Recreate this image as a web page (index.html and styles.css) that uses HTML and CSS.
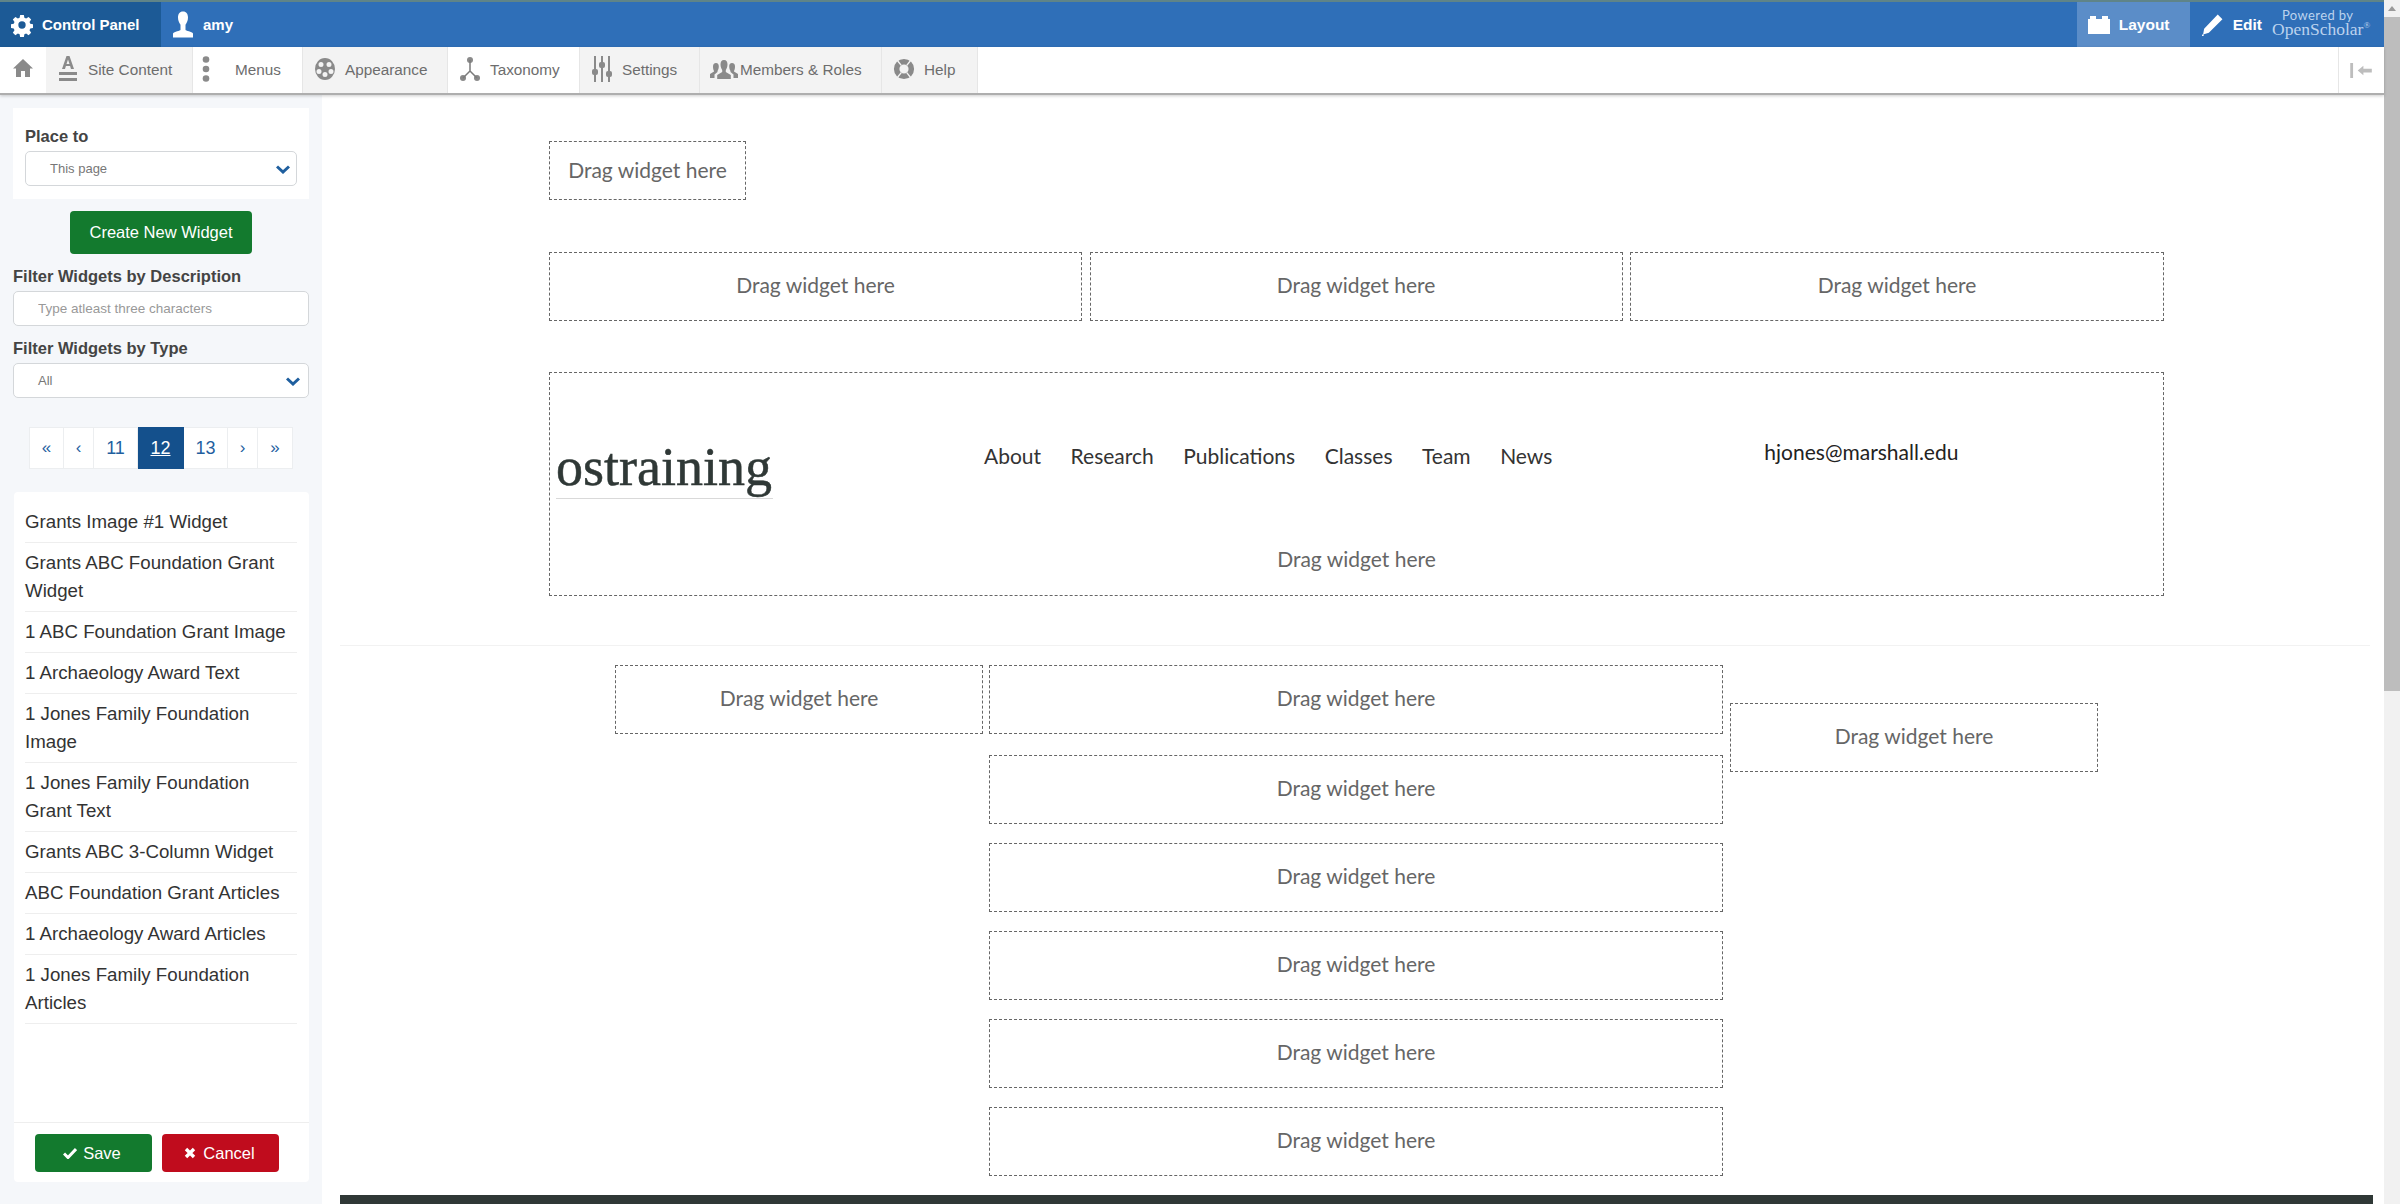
FILE: index.html
```html
<!DOCTYPE html>
<html lang="en">
<head>
    <meta charset="UTF-8">
    <title>Layout - OpenScholar</title>
    <link rel="stylesheet" href="styles.css">
</head>
<body>
<div class="window">
    <div class="page">
        <header class="topbar">
            <div class="cp">
                <svg class="ic-gear" viewBox="0 0 24 24"><path d="M10 1h4l.6 3.2 1.9.8 2.7-1.8 2.8 2.8-1.8 2.7.8 1.9 3 .6v4l-3 .6-.8 1.9 1.8 2.7-2.8 2.8-2.7-1.8-1.9.8-.6 3.2h-4l-.6-3.2-1.9-.8-2.7 1.8-2.8-2.8 1.8-2.7-.8-1.9-3-.6v-4l3-.6.8-1.9L2 6l2.8-2.8 2.7 1.8 1.9-.8zM12 8a4 4 0 1 0 0 8 4 4 0 0 0 0-8z" fill-rule="evenodd"/></svg>
                <span>Control Panel</span>
            </div>
            <div class="user">
                <svg class="ic-user" viewBox="0 0 24 26"><path d="M12 0c3.400 0 5 2.600 5 6 0 3-1.200 5.600-2.500 7.200v5c0 1.200 6.500 1.600 7.500 3.800v4H2v-4c1-2.200 7.500-2.600 7.500-3.800v-5C8.200 11.600 7 9 7 6c0-3.400 1.600-6 5-6z"/></svg>
                <span>amy</span>
            </div>
            <div class="topright">
                <div class="mode active">
                    <svg class="ic-block" viewBox="0 0 22 18"><path d="M0 3h2V0h6v3h6V0h6v3h2v15H0z"/></svg>
                    <span>Layout</span>
                </div>
                <div class="mode">
                    <svg class="ic-pencil" viewBox="0 0 22 22"><path d="M16 1.500l4.500 4.500L7.500 19 2 20.500 3 15zM1 20.500h1.500V22H1z"/></svg>
                    <span>Edit</span>
                </div>
                <div class="powered">
                    <span class="p1">Powered by</span>
                    <span class="p2">OpenScholar<sup>&reg;</sup></span>
                </div>
            </div>
        </header>

        <nav class="toolbar">
            <a class="tab home"><svg viewBox="0 0 22 20"><path d="M11 1l10 9.500h-3V19h-5v-6H9v6H4v-8.500H1z"/></svg></a>
            <a class="tab grey w-site"><svg class="ic" viewBox="0 0 20 26"><path d="M8.500 0h3L16 13h-3l-.9-3H7.900L7 13H4zM8.500 8h3L10 3.500zM1 16h18v3H1zM1 22h18v3H1z" fill-rule="evenodd"/></svg>Site Content</a>
            <a class="tab w-menus"><svg class="ic" viewBox="0 0 20 30"><circle cx="10" cy="4" r="3.800"/><circle cx="10" cy="15" r="3.800"/><circle cx="10" cy="26" r="3.800"/></svg>Menus</a>
            <a class="tab grey w-appear"><svg class="ic" viewBox="0 0 22 24"><path d="M11 1a10 11 0 1 0 0 22 10 11 0 0 0 0-22zM7 5a2.500 2.500 0 1 1 0 5 2.500 2.500 0 0 1 0-5zm8 0a2.500 2.500 0 1 1 0 5 2.500 2.500 0 0 1 0-5zM5 12a2.500 2.500 0 1 1 0 5 2.500 2.500 0 0 1 0-5zm12 0a2.500 2.500 0 1 1 0 5 2.500 2.500 0 0 1 0-5zm-6 3a2.500 2.500 0 1 1 0 5 2.500 2.500 0 0 1 0-5z" fill-rule="evenodd"/></svg>Appearance</a>
            <a class="tab w-tax"><svg class="ic" viewBox="0 0 22 26"><circle cx="11" cy="4" r="3"/><circle cx="4" cy="22" r="3"/><circle cx="18" cy="22" r="3"/><path d="M11 4v11L4 22M11 15l7 7" fill="none" stroke="#7b7b7b" stroke-width="1.500"/></svg>Taxonomy</a>
            <a class="tab grey w-set"><svg class="ic" viewBox="0 0 22 26"><path d="M3 0h2v26H3zM10 0h2v26h-2zM17 0h2v26h-2z"/><rect x="1" y="13" width="6" height="6" rx="2"/><rect x="8" y="6" width="6" height="6" rx="2"/><rect x="15" y="15" width="6" height="6" rx="2"/></svg>Settings</a>
            <a class="tab grey w-mem"><svg class="ic-wide" viewBox="0 0 28 20"><path d="M14 1c2.500 0 3.500 2 3.500 4.500S16.500 10 15.800 11v2l5 3v4H7.200v-4l5-3v-2c-.7-1-1.700-3-1.700-5.500S11.500 1 14 1z"/><path d="M6 4c2 0 2.800 1.500 2.800 3.500S8 11 7.500 12v1l-3 2.500V19H0v-4l4-2.500V12c-.5-1-1-2.500-1-4.500S4 4 6 4zM22 4c2 0 3 1.500 3 3.500s-.5 3.500-1 4.500v.5l4 2.500v4h-4.500v-3.500l-3-2.500v-1c-.5-1-1.300-2.500-1.300-4.500S20 4 22 4z"/></svg>Members &amp; Roles</a>
            <a class="tab grey w-help"><svg class="ic" viewBox="0 0 24 24"><path d="M12 1a11 11 0 1 0 0 22 11 11 0 0 0 0-22zm0 6a5 5 0 1 1 0 10 5 5 0 0 1 0-10z" fill-rule="evenodd"/><path d="M5 3l4 5M19 3l-4 5M5 21l4-5M19 21l-4-5" stroke="#f3f3f3" stroke-width="1.500"/></svg>Help</a>
            <div class="collapse">
                <svg viewBox="0 0 24 16"><path d="M0 0h3v16H0zM8 8l6-5v3h9v4h-9v3z"/></svg>
            </div>
        </nav>

        <div class="body">
            <aside class="sidebar">
                <div class="panel place">
                    <label class="lbl">Place to</label>
                    <div class="select small">
                        <span>This page</span>
                        <svg class="chev" viewBox="0 0 14 10"><path d="M1 2.500L7 8l6-5.500" fill="none" stroke="#1f5f9f" stroke-width="3"/></svg>
                    </div>
                </div>
                <button class="btn create">Create New Widget</button>
                <label class="lbl outer">Filter Widgets by Description</label>
                <input class="search" type="text" placeholder="Type atleast three characters">
                <label class="lbl outer second">Filter Widgets by Type</label>
                <div class="select wide">
                    <span>All</span>
                    <svg class="chev" viewBox="0 0 14 10"><path d="M1 2.500L7 8l6-5.500" fill="none" stroke="#1f5f9f" stroke-width="3"/></svg>
                </div>
                <ul class="pager">
                    <li class="s1 sm">&laquo;</li>
                    <li class="s2 sm">&lsaquo;</li>
                    <li class="s3">11</li>
                    <li class="s4 current">12</li>
                    <li class="s3">13</li>
                    <li class="s2 sm">&rsaquo;</li>
                    <li class="s1 sm">&raquo;</li>
                </ul>
                <div class="panel widgets">
                    <ul class="widget-list">
                        <li>Grants Image #1 Widget</li>
                        <li>Grants ABC Foundation Grant Widget</li>
                        <li>1 ABC Foundation Grant Image</li>
                        <li>1 Archaeology Award Text</li>
                        <li>1 Jones Family Foundation Image</li>
                        <li>1 Jones Family Foundation Grant Text</li>
                        <li>Grants ABC 3-Column Widget</li>
                        <li>ABC Foundation Grant Articles</li>
                        <li>1 Archaeology Award Articles</li>
                        <li>1 Jones Family Foundation Articles</li>
                    </ul>
                    <div class="actions">
                        <button class="btn save"><svg viewBox="0 0 14 12"><path d="M1 6.500l4 4L13 2" fill="none" stroke="#fff" stroke-width="3"/></svg>Save</button>
                        <button class="btn cancel"><svg viewBox="0 0 12 12"><path d="M2 2l8 8M10 2l-8 8" fill="none" stroke="#fff" stroke-width="3.400"/></svg>Cancel</button>
                    </div>
                </div>
            </aside>

            <main class="main">
                <div class="region">
                    <div class="drop first">Drag widget here</div>
                </div>
                <div class="region three">
                    <div class="drop">Drag widget here</div>
                    <div class="drop">Drag widget here</div>
                    <div class="drop">Drag widget here</div>
                </div>
                <div class="region">
                    <div class="site-header">
                        <div class="brand-row">
                            <div class="logo">ostraining</div>
                            <ul class="site-nav">
                                <li>About</li>
                                <li>Research</li>
                                <li>Publications</li>
                                <li>Classes</li>
                                <li>Team</li>
                                <li>News</li>
                            </ul>
                            <div class="email">hjones@marshall.edu</div>
                        </div>
                        <div class="drop bare">Drag widget here</div>
                    </div>
                </div>
                <hr class="rule">
                <div class="content-row">
                    <div class="col side"><div class="drop">Drag widget here</div></div>
                    <div class="col center">
                        <div class="drop lead">Drag widget here</div>
                        <div class="drop">Drag widget here</div>
                        <div class="drop">Drag widget here</div>
                        <div class="drop">Drag widget here</div>
                        <div class="drop">Drag widget here</div>
                        <div class="drop">Drag widget here</div>
                    </div>
                    <div class="col side right"><div class="drop">Drag widget here</div></div>
                </div>
                <div class="footer-bar"></div>
            </main>
        </div>
    </div>

    <div class="scrollbar">
        <div class="arrow"></div>
        <div class="thumb"></div>
    </div>
</div>
</body>
</html>
```

FILE: styles.css
```css
* {
    box-sizing: border-box;
}
html, body {
    margin: 0;
    height: 100%;
    overflow: hidden;
}
body {
    font-family: "Liberation Sans", Arial, sans-serif;
    color: #333;
    background: #fff;
}
ul {
    list-style: none;
    margin: 0;
    padding: 0;
}
.window {
    display: flex;
    height: 1204px;
}
.page {
    flex: 1;
    min-width: 0;
    display: flex;
    flex-direction: column;
}

/* top blue bar */
.topbar {
    height: 47px;
    display: flex;
    background: #2f6fb8;
    border-top: 2px solid #5f8488;
    color: #fff;
    font-weight: bold;
    font-size: 15px;
}
.cp {
    width: 161px;
    display: flex;
    align-items: center;
    background: #1c5a96;
    padding-left: 11px;
}
.ic-gear {
    width: 22px;
    height: 24px;
    fill: #fff;
    margin-right: 9px;
}
.user {
    display: flex;
    align-items: center;
    padding-left: 10px;
}
.ic-user {
    width: 24px;
    height: 27px;
    fill: #fff;
    margin-right: 8px;
}
.topright {
    margin-left: auto;
    display: flex;
    font-size: 15.500px;
}
.mode {
    display: flex;
    align-items: center;
    padding: 0 11px;
}
.mode.active {
    width: 113px;
    background: #5b8dc8;
}
.ic-block {
    width: 22px;
    height: 18px;
    fill: #fff;
    margin-right: 9px;
}
.ic-pencil {
    width: 23px;
    height: 23px;
    fill: #fff;
    margin-right: 9px;
}
.mode:not(.active) {
    padding: 0 0 0 11px;
}
.powered {
    width: 122px;
    padding: 6px 0 0 10px;
    display: flex;
    flex-direction: column;
    color: #bcd3ee;
    font-weight: normal;
}
.p1 {
    font-family: Lato, sans-serif;
    font-size: 13px;
    line-height: 14px;
    padding-left: 10px;
    letter-spacing: 0.4px;
}
.p2 {
    font-family: "Liberation Serif", serif;
    font-size: 17.500px;
    line-height: 15px;
    white-space: nowrap;
}
.p2 sup {
    font-size: 9px;
    line-height: 0;
}

/* grey tabs row */
.toolbar {
    height: 48px;
    display: flex;
    align-items: stretch;
    background: #fff;
    border-bottom: 2px solid #aeaeae;
    box-shadow: 0 1px 3px rgba(0, 0, 0, 0.2);
    position: relative;
    color: #6d6d6d;
    font-size: 15.300px;
}
.tab {
    display: flex;
    align-items: center;
    padding-left: 11px;
    border-right: 1px solid #e6e6e6;
}
.tab.grey {
    background: #f3f3f3;
}
.tab.home {
    width: 46px;
    padding-left: 12px;
    border-right: 0;
}
.tab.home svg {
    width: 22px;
    height: 20px;
    fill: #8a8a8a;
    margin-top: -4px;
}
.ic {
    height: 26px;
    width: 22px;
    fill: #8a8a8a;
    margin-right: 9px;
    margin-top: -3px;
    flex: none;
}
.ic-wide {
    width: 28px;
    height: 20px;
    fill: #8a8a8a;
    margin-right: 2px;
    margin-top: -3px;
}
.w-site { width: 147px; }
.w-menus { width: 110px; }
.w-menus .ic { margin-left: -9px; margin-right: 18px; }
.w-appear { width: 145px; }
.w-tax { width: 132px; }
.w-set { width: 120px; }
.w-mem { width: 182px; padding-left: 10px; }
.w-help { width: 96px; }
.collapse {
    margin-left: auto;
    width: 46px;
    border-left: 1px solid #e6e6e6;
    display: flex;
    align-items: center;
    padding-left: 11px;
}
.collapse svg {
    width: 23px;
    height: 15px;
    fill: #bdbdbd;
}

/* left column */
.body {
    flex: 1;
    min-height: 0;
    display: flex;
}
.sidebar {
    width: 322px;
    flex: none;
    display: flex;
    flex-direction: column;
    padding: 13px 13px 22px;
    background: #f5f7fa;
}
.panel {
    background: #fff;
}
.place {
    height: 91px;
    padding: 19px 12px 0;
}
.lbl {
    display: block;
    font-weight: bold;
    color: #444;
    font-size: 16.500px;
    line-height: 18px;
}
.outer {
    margin-top: 13px;
}
.select {
    display: flex;
    align-items: center;
    justify-content: space-between;
    background: #fff;
    border: 1px solid #d4d7da;
    border-radius: 5px;
    color: #777;
    font-size: 13px;
}
.select.small {
    height: 35px;
    margin-top: 6px;
    padding: 0 6px 0 24px;
}
.select.wide {
    height: 35px;
    margin-top: 6px;
    padding: 0 8px 0 24px;
}
.chev {
    width: 14px;
    height: 10px;
}
.btn {
    border: 0;
    border-radius: 4px;
    color: #fff;
    font-family: inherit;
    font-size: 16.500px;
    display: flex;
    align-items: center;
    justify-content: center;
}
.create {
    width: 182px;
    height: 43px;
    margin: 12px 0 0 57px;
    background: #137a2e;
}
.search {
    display: block;
    width: 296px;
    height: 35px;
    margin-top: 6px;
    padding: 0 0 0 24px;
    border: 1px solid #d4d7da;
    border-radius: 5px;
    font-family: inherit;
    font-size: 13.500px;
}
.search::placeholder {
    color: #999;
    opacity: 1;
}
.pager {
    display: flex;
    margin: 29px 0 0 16px;
    height: 42px;
    color: #1f5f9f;
    font-size: 18px;
}
.pager li {
    display: flex;
    align-items: center;
    justify-content: center;
    background: #fff;
    border: 1px solid #eceef0;
    border-left: 0;
}
.pager li:first-child {
    border-left: 1px solid #eceef0;
}
.pager .s1 { width: 35px; }
.pager .s2 { width: 30px; }
.pager .s3 { width: 44px; }
.pager .s4 { width: 46px; }
.pager .sm { font-size: 17px; }
.pager .current {
    background: #14508c;
    border-color: #14508c;
    color: #fff;
    text-decoration: underline;
}
.widgets {
    flex: 1;
    min-height: 0;
    margin: 23px 0 0 1px;
    display: flex;
    flex-direction: column;
    border-radius: 4px;
}
.widget-list {
    flex: 1;
    padding: 10px 12px 0 11px;
    font-size: 18.700px;
    line-height: 28px;
    color: #333;
}
.widget-list li {
    padding: 6px 0 6px;
    border-bottom: 1px solid #eeeeee;
}
.actions {
    height: 60px;
    display: flex;
    gap: 10px;
    padding: 11px 0 0 21px;
    border-top: 1px solid #eeeeee;
}
.save, .cancel {
    width: 117px;
    height: 38px;
}
.save { background: #137a2e; }
.cancel { background: #c00c1d; }
.save svg, .cancel svg {
    width: 14px;
    height: 12px;
    margin-right: 6px;
    margin-left: -3px;
}

/* layout canvas */
.main {
    flex: 1;
    min-width: 0;
    display: flex;
    flex-direction: column;
    padding-top: 46px;
    overflow: hidden;
    font-family: Lato, sans-serif;
}
.region {
    margin-left: 227px;
    width: 1615px;
    margin-bottom: 52px;
}
.three {
    display: grid;
    grid-template-columns: 533px 533px 534px;
    column-gap: 7.500px;
    margin-bottom: 51px;
}
.drop {
    height: 69px;
    display: flex;
    align-items: center;
    justify-content: center;
    padding-bottom: 5px;
    border: 1px dashed #666;
    font-size: 21px;
    color: #666;
}
.drop.first {
    width: 197px;
    height: 59px;
    padding-bottom: 3px;
}
.site-header {
    height: 224px;
    display: flex;
    flex-direction: column;
    border: 1px dashed #666;
}
.brand-row {
    flex: 1;
    display: flex;
    align-items: flex-start;
    color: #2f3836;
}
.logo {
    width: 434px;
    padding: 63px 0 0 6px;
    font-family: "Liberation Serif", serif;
    font-size: 54px;
    line-height: 62px;
    -webkit-text-stroke: 0.5px #2f3836;
}
.logo::after {
    content: "";
    display: block;
    width: 217px;
    border-bottom: 1px solid #d9d9d9;
}
.site-nav {
    display: flex;
    gap: 29.500px;
    padding-top: 69px;
    font-size: 21px;
    line-height: 28px;
    color: #333;
}
.email {
    margin-left: 212px;
    padding-top: 65px;
    font-size: 21px;
    line-height: 28px;
    color: #222;
}
.drop.bare {
    border: 0;
}
.rule {
    width: 2030px;
    margin: -3px 0 0 18px;
    border: 0;
    border-top: 1px solid #f2f2f2;
}
.content-row {
    display: flex;
    gap: 6px;
    margin: 19px 0 0 293px;
}
.col {
    display: flex;
    flex-direction: column;
    gap: 19px;
}
.side { width: 368px; }
.side.right { margin-left: 1px; }
.center { width: 734px; }
.right { padding-top: 38px; }
.lead { margin-bottom: 2px; }
.footer-bar {
    height: 20px;
    width: 2033px;
    margin: 19px 0 0 18px;
    background: #2f3836;
}

/* page scrollbar */
.scrollbar {
    width: 16px;
    flex: none;
    background: #f1f1f1;
}
.arrow {
    width: 0;
    height: 0;
    margin: 6px auto 6px;
    border: 4px solid transparent;
    border-top: 0;
    border-bottom: 5px solid #9a9a9a;
}
.thumb {
    height: 674px;
    background: #bdbdbd;
}
```
